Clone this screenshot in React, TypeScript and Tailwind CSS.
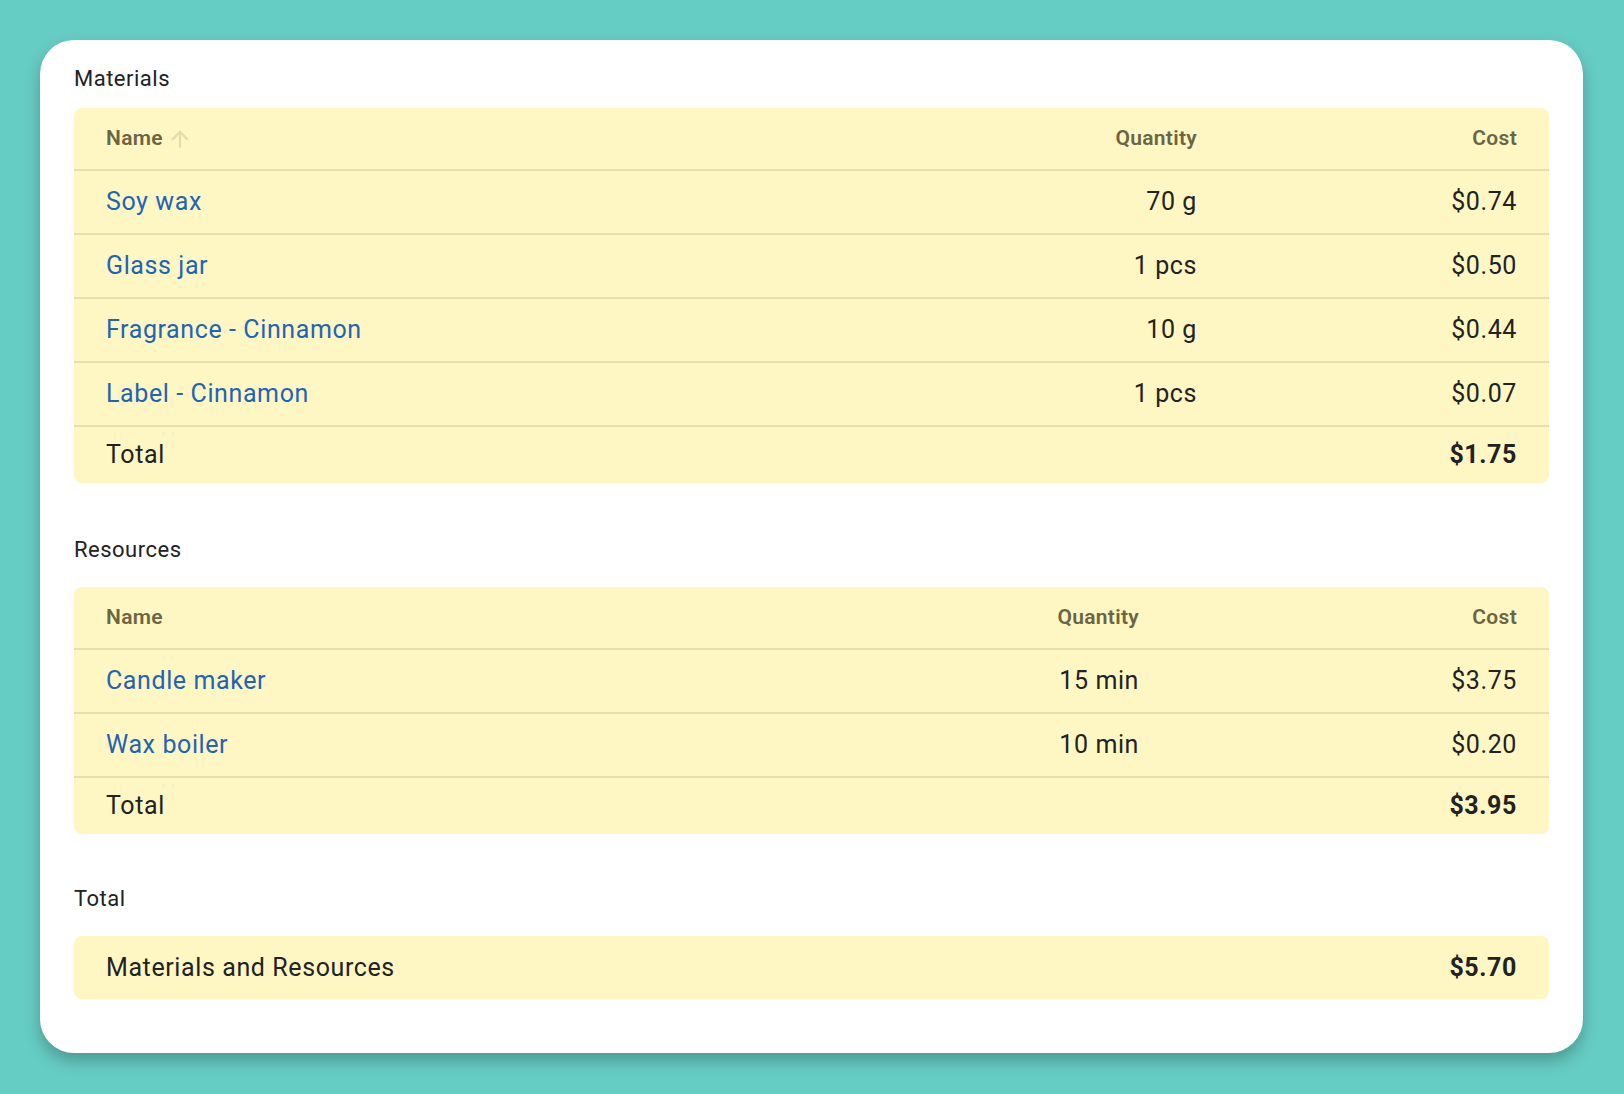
const font = { fontFamily: "Roboto, 'Liberation Sans', sans-serif" };

type Row = { name: string; qty: string; cost: string };

function CostTable({
  rows,
  total,
  sortIcon,
  costCol,
}: {
  rows: Row[];
  total: string;
  sortIcon?: boolean;
  costCol: string;
}) {
  return (
    <div className="rounded-lg bg-[#fef7c4] overflow-hidden">
      <div className={`grid ${costCol} items-center h-[63px] px-8 border-b-2 border-[#e6dfae] text-[21px] font-semibold text-[#6b6542] tracking-[0.3px]`}>
        <div className="flex items-center gap-1">
          Name
          {sortIcon && (
            <svg width="26" height="26" viewBox="0 0 24 24" className="text-[#e3dba8]">
              <path d="M4 12l1.41 1.41L11 7.83V20h2V7.83l5.58 5.59L20 12l-8-8-8 8z" fill="currentColor" />
            </svg>
          )}
        </div>
        <div className="text-right">Quantity</div>
        <div className="text-right">Cost</div>
      </div>
      {rows.map((r) => (
        <div
          key={r.name}
          className={`grid ${costCol} items-center h-[64px] px-8 border-b-2 border-[#e6dfae] text-[25px] tracking-[0.6px]`}
        >
          <div className="text-[#1f64b5]">{r.name}</div>
          <div className="text-right text-[#222]">{r.qty}</div>
          <div className="text-right text-[#222]">{r.cost}</div>
        </div>
      ))}
      <div className="flex justify-between items-center h-[56px] px-8 text-[25px] text-[#222] tracking-[0.6px]">
        <div>Total</div>
        <div className="font-bold">{total}</div>
      </div>
    </div>
  );
}

export default function App() {
  return (
    <div style={font} className="w-[1624px] h-[1094px] bg-[#66cdc4] pt-10 pl-10">
      <div className="w-[1543px] h-[1013px] bg-white rounded-[34px] shadow-[0_8px_16px_rgba(0,0,0,0.25)] px-[34px] pt-[24px]">
        <div className="text-[22px] text-[#222] tracking-[0.5px] mb-[14px] leading-[30px]">Materials</div>
        <CostTable
          sortIcon
          costCol="grid-cols-[1fr_auto_320px]"
          total="$1.75"
          rows={[
            { name: "Soy wax", qty: "70 g", cost: "$0.74" },
            { name: "Glass jar", qty: "1 pcs", cost: "$0.50" },
            { name: "Fragrance - Cinnamon", qty: "10 g", cost: "$0.44" },
            { name: "Label - Cinnamon", qty: "1 pcs", cost: "$0.07" },
          ]}
        />
        <div className="text-[22px] text-[#222] tracking-[0.5px] mt-[52px] mb-[22px] leading-[30px]">Resources</div>
        <CostTable
          costCol="grid-cols-[1fr_auto_378px]"
          total="$3.95"
          rows={[
            { name: "Candle maker", qty: "15 min", cost: "$3.75" },
            { name: "Wax boiler", qty: "10 min", cost: "$0.20" },
          ]}
        />
        <div className="text-[22px] text-[#222] tracking-[0.5px] mt-[50px] mb-[22px] leading-[30px]">Total</div>
        <div className="flex justify-between items-center h-[63px] px-8 rounded-lg bg-[#fef7c4] text-[25px] text-[#222] tracking-[0.6px]">
          <div>Materials and Resources</div>
          <div className="font-bold">$5.70</div>
        </div>
      </div>
    </div>
  );
}
